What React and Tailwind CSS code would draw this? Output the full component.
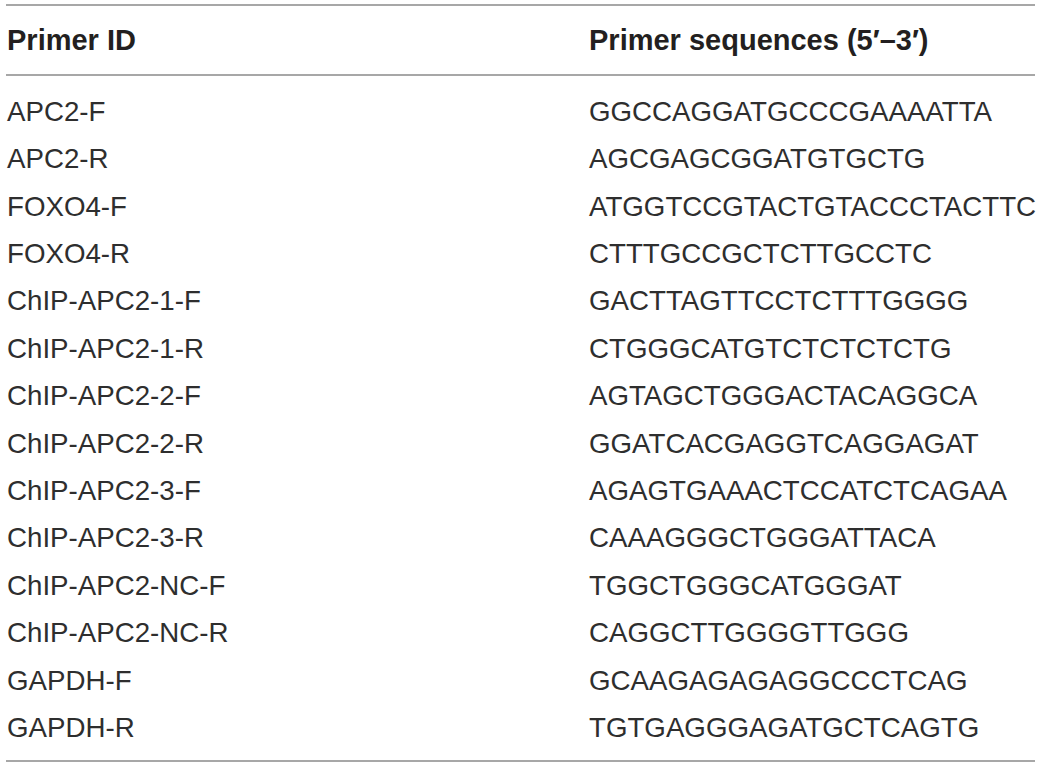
const rows = [
  ['APC2-F', 'GGCCAGGATGCCCGAAAATTA'],
  ['APC2-R', 'AGCGAGCGGATGTGCTG'],
  ['FOXO4-F', 'ATGGTCCGTACTGTACCCTACTTC'],
  ['FOXO4-R', 'CTTTGCCGCTCTTGCCTC'],
  ['ChIP-APC2-1-F', 'GACTTAGTTCCTCTTTGGGG'],
  ['ChIP-APC2-1-R', 'CTGGGCATGTCTCTCTCTG'],
  ['ChIP-APC2-2-F', 'AGTAGCTGGGACTACAGGCA'],
  ['ChIP-APC2-2-R', 'GGATCACGAGGTCAGGAGAT'],
  ['ChIP-APC2-3-F', 'AGAGTGAAACTCCATCTCAGAA'],
  ['ChIP-APC2-3-R', 'CAAAGGGCTGGGATTACA'],
  ['ChIP-APC2-NC-F', 'TGGCTGGGCATGGGAT'],
  ['ChIP-APC2-NC-R', 'CAGGCTTGGGGTTGGG'],
  ['GAPDH-F', 'GCAAGAGAGAGGCCCTCAG'],
  ['GAPDH-R', 'TGTGAGGGAGATGCTCAGTG'],
];

export default function App() {
  return (
    <div className="w-[1040px] h-[769px] bg-white pt-[4px] pl-[6px] font-['Liberation_Sans',Arial,sans-serif] text-[#231f20]">
      <div className="w-[1029px] border-t-2 border-b-2 border-[#a7a7a7]">
        {/* Header */}
        <div className="grid grid-cols-[582px_1fr] h-[70px] items-center border-b-2 border-[#a7a7a7] text-[29px] font-bold pl-[1px] pt-[2px]">
          <span>Primer ID</span>
          <span>Primer sequences (5′–3′)</span>
        </div>

        {/* Body */}
        <div className="pt-[12px] pb-[9px] text-[#2e2e2e]">
          {rows.map(([id, seq]) => (
            <div key={id} className="grid grid-cols-[582px_1fr] h-[47.4px] items-center text-[27.7px] pl-[1px]">
              <span>{id}</span>
              <span>{seq}</span>
            </div>
          ))}
        </div>
      </div>
    </div>
  );
}
